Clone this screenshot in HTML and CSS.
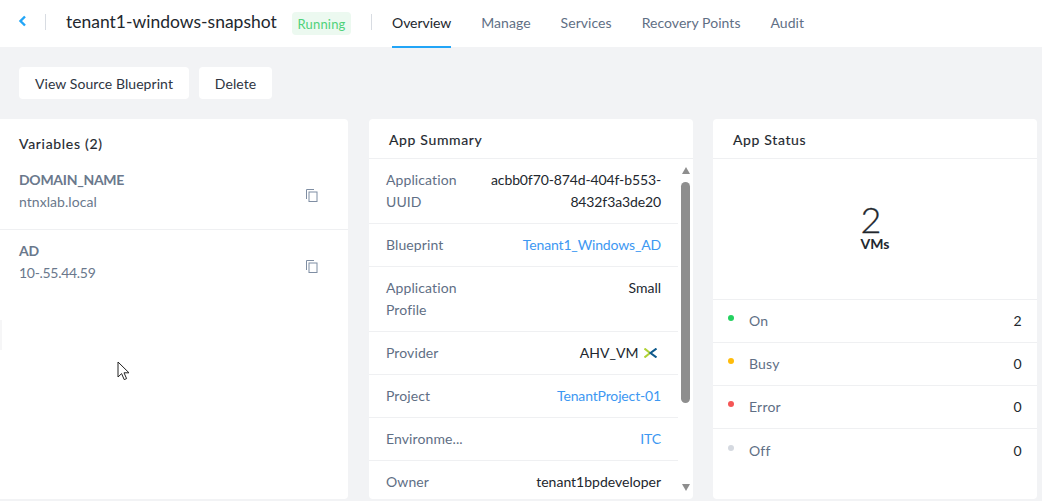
FILE: index.html
```html
<!DOCTYPE html>
<html lang="en">
<head>
<meta charset="utf-8">
<title>tenant1-windows-snapshot</title>
<link rel="stylesheet" href="styles.css">
</head>
<body>
<header class="topbar">
  <svg class="back" width="9" height="12" viewBox="0 0 9 12"><path d="M7 1.500 2.500 6 7 10.500" fill="none" stroke="#22a5f7" stroke-width="2.400"/></svg>
  <span class="sep sep-a"></span>
  <h1 class="title">tenant1-windows-snapshot</h1>
  <span class="badge">Running</span>
  <span class="sep sep-b"></span>
  <nav class="tabs">
    <a class="tab active">Overview</a>
    <a class="tab">Manage</a>
    <a class="tab">Services</a>
    <a class="tab">Recovery Points</a>
    <a class="tab">Audit</a>
  </nav>
</header>
<div class="actions">
  <button class="btn btn-wide">View Source Blueprint</button>
  <button class="btn btn-narrow">Delete</button>
</div>
<main class="cards">
  <section class="card vars">
    <h2 class="vars-title">Variables (2)</h2>
    <div class="var var-first">
      <div><div class="var-name">DOMAIN_NAME</div><div class="var-value">ntnxlab.local</div></div>
      <svg class="copy" width="12" height="13" viewBox="0 0 12 13"><path d="M.5 10V.5H8" fill="none" stroke="#7f8ea3"/><rect x="3" y="3" width="8" height="9.500" fill="none" stroke="#7f8ea3"/></svg>
    </div>
    <div class="var">
      <div><div class="var-name">AD</div><div class="var-value num">10-.55.44.59</div></div>
      <svg class="copy" width="12" height="13" viewBox="0 0 12 13"><path d="M.5 10V.5H8" fill="none" stroke="#7f8ea3"/><rect x="3" y="3" width="8" height="9.500" fill="none" stroke="#7f8ea3"/></svg>
    </div>
  </section>
  <section class="card summary">
    <h2 class="card-title">App Summary</h2>
    <div class="summary-body">
      <div class="rows">
        <div class="row"><span class="key">Application UUID</span><span class="val uuid">acbb0f70-874d-404f-b553-8432f3a3de20</span></div>
        <div class="row"><span class="key">Blueprint</span><span class="val link">Tenant1_Windows_AD</span></div>
        <div class="row"><span class="key">Application Profile</span><span class="val">Small</span></div>
        <div class="row"><span class="key">Provider</span><span class="val">AHV_VM <svg class="nx" width="13" height="10" viewBox="0 0 13 10"><path d="M.5 .5 6 5 .5 9.500" fill="none" stroke="#b0d235" stroke-width="2"/><path d="M12.500 .5 6.500 5l6 4.500" fill="none" stroke="#0f5a8c" stroke-width="2"/></svg></span></div>
        <div class="row"><span class="key">Project</span><span class="val link">TenantProject-01</span></div>
        <div class="row"><span class="key">Environme...</span><span class="val link">ITC</span></div>
        <div class="row"><span class="key">Owner</span><span class="val">tenant1bpdeveloper</span></div>
      </div>
      <div class="scrollbar">
        <span class="arrow up"></span>
        <span class="thumb"></span>
        <span class="arrow down"></span>
      </div>
    </div>
  </section>
  <section class="card status">
    <h2 class="card-title">App Status</h2>
    <div class="count"><div class="count-num">2</div><div class="count-label">VMs</div></div>
    <div class="srow"><span class="dot on"></span><span class="skey">On</span><span class="sval">2</span></div>
    <div class="srow"><span class="dot busy"></span><span class="skey">Busy</span><span class="sval">0</span></div>
    <div class="srow"><span class="dot error"></span><span class="skey">Error</span><span class="sval">0</span></div>
    <div class="srow"><span class="dot off"></span><span class="skey">Off</span><span class="sval">0</span></div>
  </section>
</main>
<span class="notch"></span>
<svg class="cursor" width="14" height="20" viewBox="0 0 14 20"><path d="M1 1v15l3.600-3.400 2.600 6 2.400-1-2.600-5.800h5z" fill="#fff" stroke="#222" stroke-width="1"/></svg>
</body>
</html>
```
FILE: styles.css
```css
* { box-sizing: border-box; }
html, body { margin: 0; height: 501px; overflow: hidden; }
body { background: #f2f3f5; font-family: Lato, "Open Sans", sans-serif; font-size: 14px; color: #22272e; position: relative; }
.topbar { height: 47px; background: #fff; display: flex; align-items: flex-start; padding-left: 18px; }
.back { flex: none; margin-top: 15px; }
.sep { width: 1px; height: 16px; background: #d8dce2; flex: none; margin-top: 14px; }
.sep-a { margin-left: 18px; }
.title { margin: 11px 0 0 20px; font-size: 17.500px; line-height: 22px; font-weight: 400; letter-spacing: 0; color: #22272e; width: 211px; white-space: nowrap; }
.badge { margin: 12px 0 0 15px; height: 23px; width: 59px; text-align: center; line-height: 24px; background: #ecf9f0; color: #4fd27a; border-radius: 4px; font-size: 13px; letter-spacing: .2px; }
.sep-b { margin-left: 20px; }
.tabs { display: flex; height: 48px; margin-left: 20px; gap: 30px; }
.tab { height: 48px; line-height: 46px; color: #5f6f85; letter-spacing: .05px; font-size: 14px; }
.tab.active { color: #22272e; border-bottom: 2px solid #22a5f7; letter-spacing: -.05px; }
.actions { display: flex; gap: 10px; padding: 20px 0 0 19px; height: 72px; }
.btn { height: 32px; border: 0; border-radius: 4px; background: #fff; font: inherit; color: #2e3542; letter-spacing: .07px; padding: 0; }
.btn-wide { width: 170px; }
.btn-narrow { width: 73px; }
.cards { display: grid; grid-template-columns: 348px 324px 324px; column-gap: 21px; height: 380px; }
.card { background: #fff; border-radius: 4px; height: 380px; overflow: hidden; }
.vars { border-radius: 0 4px 4px 0; }
.status { margin-left: -1px; width: 324px; }
.vars-title { margin: 0; padding: 16px 0 0 19px; height: 43px; font-size: 14px; font-weight: 400; letter-spacing: .7px; color: #22272e; -webkit-text-stroke: .15px #22272e; }
.var { display: flex; justify-content: space-between; padding: 11px 30px 0 19px; height: 67px; }
.var-first { border-bottom: 1px solid #eff0f2; height: 68px; padding-top: 8px; }
.var-name { font-weight: 700; color: #6a788c; letter-spacing: -.28px; line-height: 20px; }
.var-value { color: #6a788c; line-height: 20px; margin-top: 2px; letter-spacing: .05px; }
.num { letter-spacing: -.3px; }
.copy { margin-top: 19px; }
.card-title { margin: 0; height: 40px; padding: 12px 0 0 20px; font-size: 14px; font-weight: 400; letter-spacing: .65px; color: #22272e; -webkit-text-stroke: .15px #22272e; border-bottom: 1px solid #eff0f2; line-height: 17px; }
.summary-body { display: flex; height: 340px; overflow: hidden; }
.rows { width: 309px; flex: none; }
.row { display: flex; justify-content: space-between; padding: 10px 17px; border-bottom: 1px solid #eff0f2; gap: 20px; line-height: 22px; }
.row:last-child { border-bottom: 0; }
.key { width: 80px; flex: none; color: #5f6f85; letter-spacing: .1px; }
.val { text-align: right; color: #22272e; letter-spacing: 0; }
.uuid { letter-spacing: -.12px; }
.link { color: #3d98f2; letter-spacing: -.15px; }
.nx { vertical-align: 0; margin-left: 2px; margin-right: 4px; }
.scrollbar { width: 15px; display: flex; flex-direction: column; align-items: center; padding-top: 8px; }
.thumb { width: 9px; height: 221px; background: #8e8e8e; border-radius: 5px; margin: 8px 0 81px; flex: none; }
.arrow { width: 0; height: 0; flex: none; border-left: 4.500px solid transparent; border-right: 4.500px solid transparent; }
.up { border-bottom: 7px solid #8e8e8e; }
.down { border-top: 7px solid #8e8e8e; }
.count { height: 141px; text-align: center; padding-top: 44px; border-bottom: 1px solid #eff0f2; }
.count-num { font-size: 36px; line-height: 32px; color: #22272e; font-weight: 300; -webkit-text-stroke: .3px #22272e; margin-right: 8px; }
.count-label { font-size: 14px; line-height: 16px; font-weight: 700; color: #22272e; margin-top: 1px; }
.srow { display: flex; align-items: center; height: 43px; padding: 0 15px; border-bottom: 1px solid #eff0f2; }
.srow:last-child { border-bottom: 0; }
.dot { width: 6px; height: 6px; border-radius: 50%; margin: -6px 15px 0 0; flex: none; }
.on { background: #24d160; }
.busy { background: #ffbc0b; }
.error { background: #f55656; }
.off { background: #d5d9e0; }
.skey { flex: 1; color: #5f6f85; letter-spacing: .2px; margin-top: -1px; }
.sval { color: #22272e; letter-spacing: .3px; margin-top: -1px; }
.notch { position: absolute; left: 0; top: 320px; width: 2px; height: 30px; background: #f6f6f7; }
.cursor { position: absolute; left: 117px; top: 361px; }
```
